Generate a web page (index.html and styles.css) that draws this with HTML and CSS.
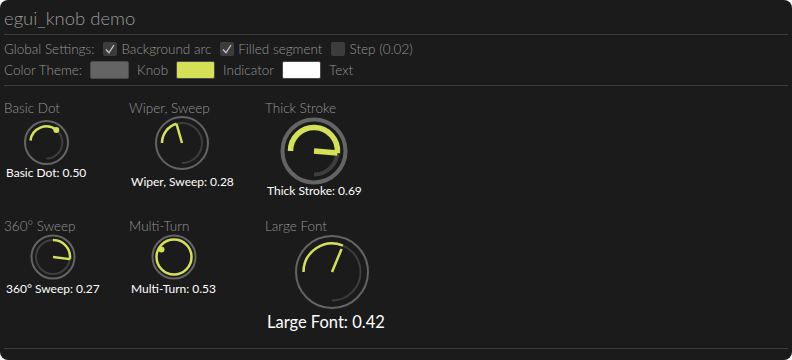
FILE: index.html
```html
<!DOCTYPE html>
<html>
<head>
    <title>egui_knob demo</title>
    <link rel="stylesheet" href="styles.css">
</head>
<body>
    <div class="window">
        <h1 class="heading">egui_knob demo</h1>
        <div class="sep"></div>

        <div class="row settings-row">
            <span class="label">Global Settings:</span>
            <label class="check">
                <span class="box"><svg width="14" height="14" viewBox="0 0 14 14"><polyline points="3,7.5 6,10.8 11,3" /></svg></span>
                Background arc
            </label>
            <label class="check">
                <span class="box"><svg width="14" height="14" viewBox="0 0 14 14"><polyline points="3,7.5 6,10.8 11,3" /></svg></span>
                Filled segment
            </label>
            <label class="check">
                <span class="box"></span>
                Step (0.02)
            </label>
        </div>

        <div class="row theme-row">
            <span class="label">Color Theme:</span>
            <span class="swatch swatch-knob"></span>
            <span class="label">Knob</span>
            <span class="swatch swatch-indicator"></span>
            <span class="label">Indicator</span>
            <span class="swatch swatch-text"></span>
            <span class="label">Text</span>
        </div>
        <div class="sep sep-lower"></div>

        <div class="knobs">
            <!-- row 1 -->
            <div class="cell">
                <div class="title">Basic Dot</div>
                <div class="knob knob-basic">
                    <svg width="47" height="47" viewBox="0 0 47 47">
                        <circle class="ring" cx="23.5" cy="23.5" r="21.5" />
                        <path class="track" d="M7.5 21.5 A16 16 0 1 1 23.5 39.5" />
                        <path class="ind" d="M7.5 21.5 A16 16 0 0 1 33.3 10.9" />
                        <circle class="dot" cx="33.3" cy="10.9" r="3" />
                    </svg>
                    <div class="value">Basic Dot: 0.50</div>
                </div>
            </div>
            <div class="cell">
                <div class="title">Wiper, Sweep</div>
                <div class="knob knob-wiper">
                    <svg width="54" height="54" viewBox="0 0 54 54">
                        <circle class="ring" cx="27" cy="27" r="26" />
                        <path class="track" d="M7 27 A20 20 0 1 1 27 47" />
                        <path class="ind" d="M7 27 A20 20 0 0 1 21.49 7.77" />
                        <line class="ind" x1="27" y1="27" x2="21.49" y2="7.77" />
                    </svg>
                    <div class="value">Wiper, Sweep: 0.28</div>
                </div>
            </div>
            <div class="cell">
                <div class="title">Thick Stroke</div>
                <div class="knob knob-thick">
                    <svg width="68" height="68" viewBox="0 0 68 68">
                        <circle class="ring ring-thick" cx="34" cy="34" r="31.5" />
                        <path class="track track-thick" d="M10.5 34 A23.5 23.5 0 1 1 34 57.5" />
                        <path class="ind ind-thick" d="M10.5 34 A23.5 23.5 0 1 1 57.41 36.05" />
                        <line class="ind ind-thick" x1="34" y1="34" x2="57.41" y2="36.05" />
                    </svg>
                    <div class="value">Thick Stroke: 0.69</div>
                </div>
            </div>

            <!-- row 2 -->
            <div class="cell">
                <div class="title">360° Sweep</div>
                <div class="knob knob-small">
                    <svg width="46" height="46" viewBox="0 0 46 46">
                        <circle class="ring" cx="23" cy="23" r="21.5" />
                        <circle class="track" cx="23" cy="23" r="17" />
                        <path class="ind" d="M23 6 A17 17 0 0 1 39.87 25.13" />
                        <line class="ind" x1="23" y1="23" x2="39.87" y2="25.13" />
                    </svg>
                    <div class="value">360° Sweep: 0.27</div>
                </div>
            </div>
            <div class="cell">
                <div class="title">Multi-Turn</div>
                <div class="knob knob-small">
                    <svg width="46" height="46" viewBox="0 0 46 46">
                        <circle class="ring" cx="23" cy="23" r="21.5" />
                        <circle class="ind" cx="23" cy="23" r="17.5" />
                        <circle class="dot" cx="10.5" cy="15.5" r="3" />
                    </svg>
                    <div class="value">Multi-Turn: 0.53</div>
                </div>
            </div>
            <div class="cell">
                <div class="title">Large Font</div>
                <div class="knob knob-large">
                    <svg width="76" height="76" viewBox="0 0 76 76">
                        <circle class="ring" cx="38" cy="38" r="36" />
                        <path class="track" d="M9.5 38 A28.5 28.5 0 1 1 38 66.5" />
                        <path class="ind" d="M9.5 38 A28.5 28.5 0 0 1 48.91 11.67" />
                        <line class="ind" x1="38" y1="38" x2="47.57" y2="14.9" />
                    </svg>
                    <div class="value value-large">Large Font: 0.42</div>
                </div>
            </div>
        </div>

        <div class="sep sep-bottom"></div>
    </div>
</body>
</html>
```

FILE: styles.css
```css
html, body {
    margin: 0;
    background: #ffffff;
}
body {
    font-family: Lato, "Open Sans", sans-serif;
    font-size: 13.5px;
    font-weight: 300;
}
.window {
    width: 792px;
    height: 360px;
    box-sizing: border-box;
    padding: 6px 4px 0 4px;
    background: #1b1b1b;
    border-radius: 8px;
    overflow: hidden;
}
.heading {
    margin: 0 0 4px 0;
    font-size: 18.5px;
    line-height: 24px;
    font-weight: 300;
    color: #9a9a9a;
}
.sep {
    height: 1px;
    background: #3c3c3c;
}
.row {
    display: flex;
    align-items: center;
    height: 18px;
    gap: 8px;
    color: #959595;
    line-height: 18px;
}
.settings-row {
    margin-top: 5px;
}
.theme-row {
    margin-top: 3px;
}
.check {
    display: flex;
    align-items: center;
    gap: 4px;
    margin-left: 1px;
}
.box {
    width: 14px;
    height: 14px;
    border-radius: 2px;
    background: #3c3c3c;
}
.box svg {
    display: block;
}
.box polyline {
    fill: none;
    stroke: #c8c8c8;
    stroke-width: 1.3;
}
.swatch {
    width: 39px;
    height: 18px;
    border-radius: 2px;
    box-sizing: border-box;
    border: 1px solid #4a4a4a;
}
.swatch-knob { background: #646464; }
.swatch-indicator { background: #d4e157; }
.swatch-text { background: #ffffff; }

.sep-lower {
    margin-top: 6px;
}
.knobs {
    display: grid;
    grid-template-columns: 125px 136px auto;
    row-gap: 20px;
    align-items: start;
    margin-top: 14px;
}
.cell {
    display: flex;
    flex-direction: column;
    align-items: flex-start;
}
.title {
    color: #959595;
    line-height: 16px;
}
.knob {
    display: flex;
    flex-direction: column;
    align-items: center;
    margin-left: 2px;
}
.knob svg {
    display: block;
    fill: none;
}
.value {
    color: #ffffff;
    font-size: 12px;
    font-weight: 400;
    line-height: 14px;
}
.ring { stroke: #646464; stroke-width: 2; }
.ring-thick { stroke-width: 4; }
.track { stroke: #3e3e3e; stroke-width: 2; }
.track-thick { stroke-width: 4; }
.ind { stroke: #d4e157; stroke-width: 2.5; }
.ind-thick { stroke-width: 5.5; }
.dot { fill: #d4e157; }

.knob-basic svg { margin-top: 3px; }
.knob-wiper .value { margin-top: 5px; }
.knob-thick svg { margin-top: 1px; }
.knob-thick .value { margin-top: -1px; }
.knob-small .value { margin-top: 2px; }
.knob-large svg { margin-left: 12px; }
.value-large {
    font-size: 16.5px;
    line-height: 22px;
    margin-top: 1px;
}
.sep-bottom {
    margin-top: 15px;
}
```
